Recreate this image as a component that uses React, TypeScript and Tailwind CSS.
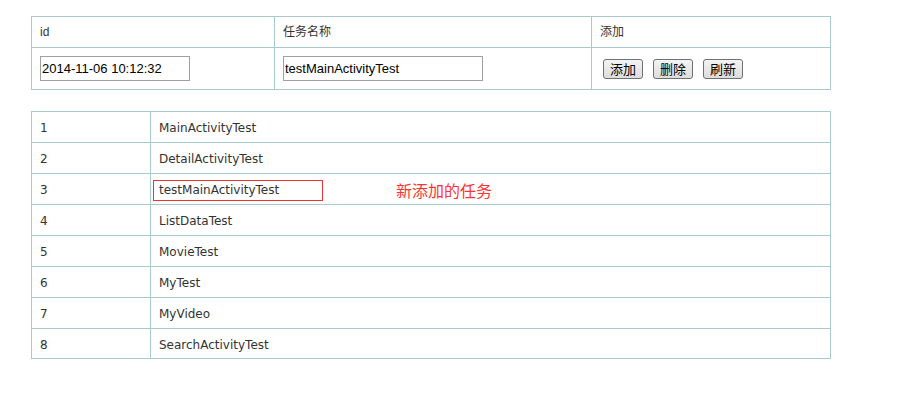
const tasks = [
  "MainActivityTest",
  "DetailActivityTest",
  "testMainActivityTest",
  "ListDataTest",
  "MovieTest",
  "MyTest",
  "MyVideo",
  "SearchActivityTest",
]

const cell = "border border-[#a9cacb] px-[8px] align-middle"

function Btn({ label }: { label: string }) {
  return (
    <button className="h-[20px] w-[40px] rounded-[3px] border border-[#707070] bg-gradient-to-b from-[#f4f4f4] to-[#dcdcdc] text-[13px] leading-none text-black [font-family:'Noto_Sans_CJK_SC',sans-serif]">
      {label}
    </button>
  )
}

export default function App() {
  return (
    <div className="min-h-[413px] w-[904px] bg-white pl-[31px] pt-[16px] text-[#333] [font-family:'Liberation_Sans','Noto_Sans_CJK_SC',sans-serif]">
      <table className="w-[800px] border-collapse text-[12px]">
        <tbody>
          <tr className="h-[31px]">
            <td className={`${cell} w-[243px]`}>id</td>
            <td className={`${cell} w-[317px]`}>任务名称</td>
            <td className={cell}>添加</td>
          </tr>
          <tr className="h-[42px]">
            <td className={cell}>
              <input
                readOnly
                value="2014-11-06 10:12:32"
                className="h-[25px] w-[150px] border border-[#a0a0a0] px-[1px] text-[13px] text-black outline-none"
              />
            </td>
            <td className={cell}>
              <input
                readOnly
                value="testMainActivityTest"
                className="h-[25px] w-[200px] border border-[#a0a0a0] px-[1px] text-[13px] text-black outline-none"
              />
            </td>
            <td className={`${cell} pl-[11px]`}>
              <div className="flex gap-[10px]">
                <Btn label="添加" />
                <Btn label="删除" />
                <Btn label="刷新" />
              </div>
            </td>
          </tr>
        </tbody>
      </table>

      <table className="mt-[21px] w-[800px] border-collapse text-[12px] text-[#333] [font-family:'DejaVu_Sans',sans-serif]">
        <tbody>
          {tasks.map((t, i) => (
            <tr key={t} className={i === 7 ? "h-[30px]" : "h-[31px]"}>
              <td className={`${cell} w-[119px] pt-[2px]`}>{i + 1}</td>
              <td className={`${cell} pl-[2px] pt-[2px]`}>
                {i === 2 ? (
                  <div className="flex items-center">
                    <span className="inline-flex h-[21px] w-[170px] items-center border border-[#e33] pl-[5px]">
                      {t}
                    </span>
                    <span className="ml-[73px] text-[16px] text-[#f33] [font-family:'Noto_Sans_CJK_SC',sans-serif]">
                      新添加的任务
                    </span>
                  </div>
                ) : (
                  <span className="pl-[6px]">{t}</span>
                )}
              </td>
            </tr>
          ))}
        </tbody>
      </table>
    </div>
  )
}
